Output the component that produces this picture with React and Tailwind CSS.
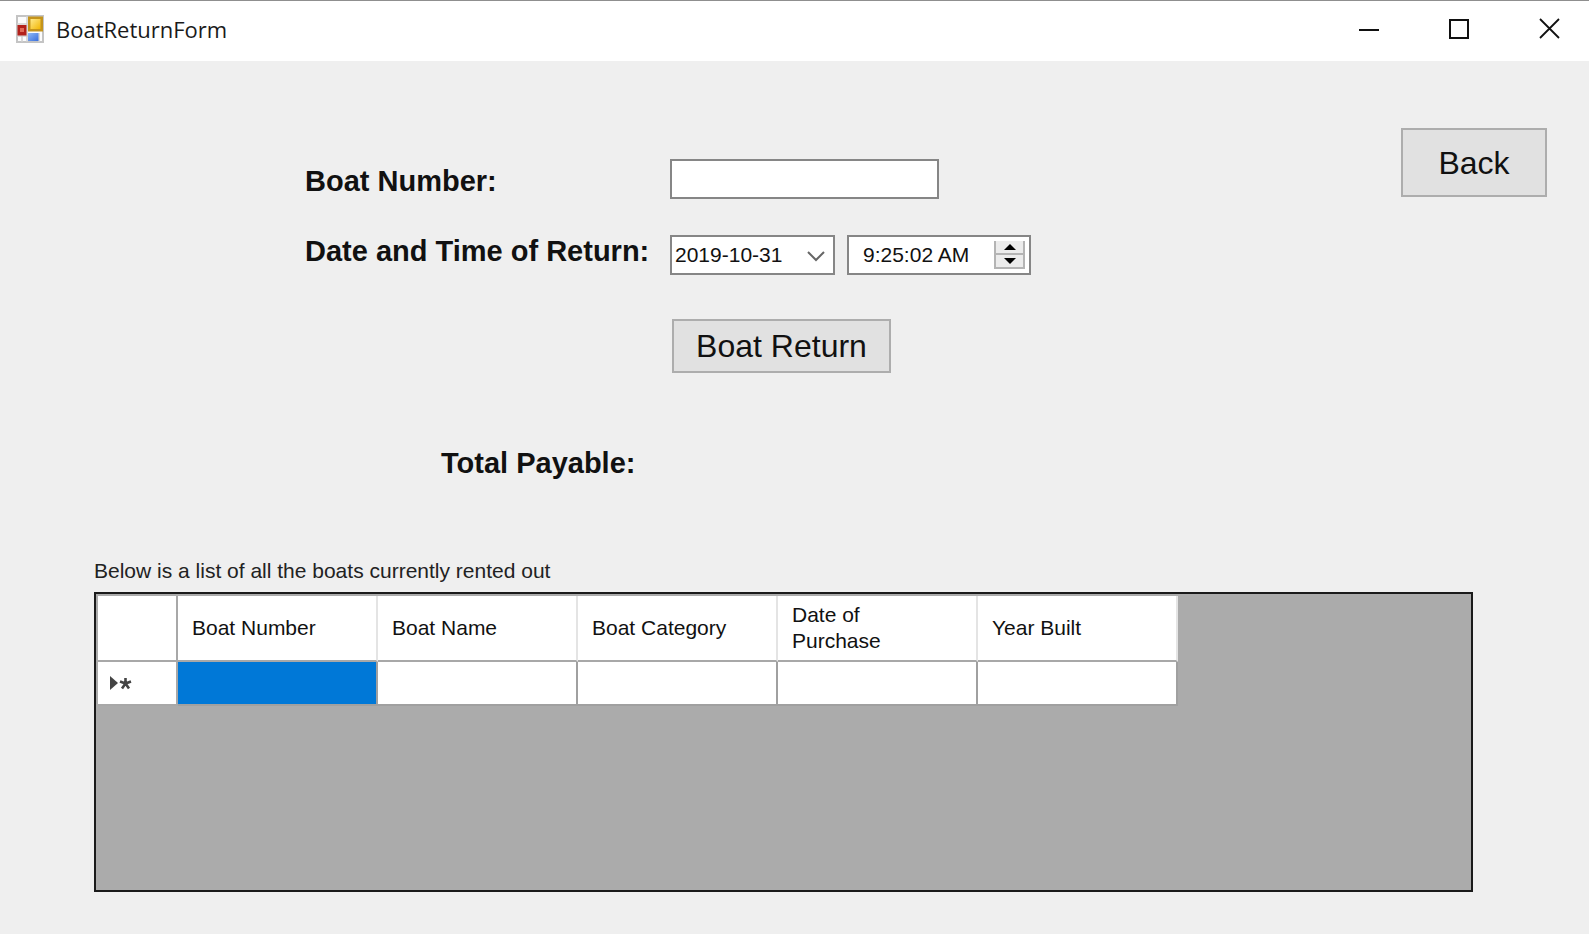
const columns = ["Boat Number", "Boat Name", "Boat Category", "Date of Purchase", "Year Built"];

function FormIcon() {
  return (
    <svg className="size-7" viewBox="0 0 28 28" aria-hidden="true">
      <defs>
        <linearGradient id="gold" x1="0" y1="0" x2="1" y2="1">
          <stop offset="0" stopColor="#ffe98a" />
          <stop offset="1" stopColor="#f2b705" />
        </linearGradient>
        <linearGradient id="blue" x1="0" y1="0" x2="1" y2="1">
          <stop offset="0" stopColor="#8fb8f5" />
          <stop offset="1" stopColor="#3a6fdc" />
        </linearGradient>
      </defs>
      <rect x="1" y="1" width="26" height="26" fill="#fcfcfc" stroke="#c4c4c4" strokeWidth="2" />
      <path d="M1 9H11M1 21H12M6 21V27M11 1V27M23 18V27" stroke="#cfcfcf" strokeWidth="1.500" />
      <rect x="12" y="1.500" width="15" height="15" fill="#c4941c" />
      <rect x="14.500" y="4" width="10" height="10" fill="url(#gold)" />
      <rect x="1.500" y="10" width="9" height="10.500" fill="#b3211b" />
      <rect x="4" y="13" width="4" height="4" fill="#e06a58" />
      <rect x="12" y="18" width="10.500" height="8" fill="url(#blue)" />
    </svg>
  );
}

function TitleBar() {
  return (
    <header className="flex h-[61px] items-center border-t border-[#8f8f8f] bg-white pr-7 pb-1 pl-4">
      <FormIcon />
      <h1 className="ml-3 font-['Open_Sans',sans-serif] text-[22px] leading-8 text-[#1a1a1a]">BoatReturnForm</h1>
      <div className="ml-auto flex items-center gap-[66px]">
        <button type="button" aria-label="Minimize" className="flex size-6 items-center justify-center">
          <svg className="size-6" viewBox="0 0 24 24"><path d="M2 13H22" stroke="#111" strokeWidth="2" /></svg>
        </button>
        <button type="button" aria-label="Maximize" className="flex size-6 items-center justify-center">
          <svg className="size-6" viewBox="0 0 24 24"><rect x="3" y="3" width="18" height="18" fill="none" stroke="#111" strokeWidth="2" /></svg>
        </button>
        <button type="button" aria-label="Close" className="flex size-6 items-center justify-center">
          <svg className="size-6" viewBox="0 0 24 24"><path d="M3 2L22 21M22 2L3 21" stroke="#111" strokeWidth="1.800" /></svg>
        </button>
      </div>
    </header>
  );
}

function SpinButton({ label, up }) {
  return (
    <button type="button" aria-label={label} className="flex h-[14px] w-[31px] items-center justify-center border-x-2 border-b-2 border-[#b4b4b4] bg-[#ececec]">
      <svg className="h-[6px] w-3" viewBox="0 0 12 6">
        <path d={up ? "M6 0L12 6H0Z" : "M6 6L12 0H0Z"} fill="#000" />
      </svg>
    </button>
  );
}

function RentalForm() {
  return (
    <form className="flex items-start pr-[42px] pl-[305px]" onSubmit={(e) => e.preventDefault()}>
      <div className="flex w-[365px] shrink-0 flex-col gap-[30px] pt-[100px] text-[29px] leading-10 font-bold text-[#111]">
        <label htmlFor="boat-number">Boat Number:</label>
        <label htmlFor="return-date">Date and Time of Return:</label>
        <p className="pt-[142px] pl-[136px]">Total Payable:</p>
      </div>
      <div className="flex flex-col items-start pt-[98px]">
        <input id="boat-number" type="text" className="h-10 w-[269px] border-2 border-[#868686] bg-white px-1 text-[21px] outline-none" />
        <div className="mt-9 flex gap-3">
          <div className="flex h-10 w-[165px] items-center border-2 border-[#868686] bg-white pr-2 pl-[3px]">
            <input id="return-date" type="text" defaultValue="2019-10-31" className="w-full min-w-0 text-[21px] leading-8 text-[#111] outline-none" />
            <button type="button" aria-label="Open calendar" className="shrink-0">
              <svg className="h-5 w-[18px]" viewBox="0 0 18 20"><path d="M1 7L9 15L17 7" fill="none" stroke="#666" strokeWidth="2" /></svg>
            </button>
          </div>
          <div className="flex h-10 w-[184px] items-center border-2 border-[#868686] bg-white pr-1 pl-[14px]">
            <input type="text" aria-label="Time of return" defaultValue="9:25:02 AM" className="w-full min-w-0 text-[21px] leading-8 text-[#111] outline-none" />
            <div className="flex shrink-0 flex-col">
              <SpinButton label="Later" up />
              <SpinButton label="Earlier" />
            </div>
          </div>
        </div>
        <button type="submit" className="mt-11 ml-[2px] h-[54px] w-[219px] border-2 border-[#adadad] bg-[#e1e1e1] text-[32px] leading-10 text-[#111]">
          Boat Return
        </button>
      </div>
      <button type="button" className="mt-[67px] ml-auto h-[69px] w-[146px] border-2 border-[#adadad] bg-[#e1e1e1] text-[32px] leading-10 text-[#111]">
        Back
      </button>
    </form>
  );
}

function BoatTable() {
  return (
    <section className="flex flex-1 flex-col pt-[76px] pr-[116px] pb-[42px] pl-[94px]">
      <h2 id="rented" className="text-[21px] leading-6 text-[#222]">Below is a list of all the boats currently rented out</h2>
      <div className="mt-[9px] flex-1 border-2 border-[#1a1a1a] bg-[#ababab] pt-[2px] pl-[2px]">
        <table aria-labelledby="rented" className="w-[1080px] table-fixed border-separate border-spacing-0 text-left text-[21px] leading-[26px] text-[#111]">
          <thead>
            <tr className="h-[66px]">
              <td className="w-20 border-r-2 border-b-2 border-[#a8a8a8] bg-white" />
              {columns.map((c) => (
                <th key={c} scope="col" className="border-r-2 border-b-2 border-r-[#e4e4e4] border-b-[#a8a8a8] bg-white pr-8 pl-[14px] font-normal">
                  {c}
                </th>
              ))}
            </tr>
          </thead>
          <tbody>
            <tr className="h-11">
              <th scope="row" aria-label="New row" className="border-r-2 border-b-2 border-[#a8a8a8] bg-white pl-3">
                <svg className="h-4 w-6" viewBox="0 0 24 16">
                  <path d="M0 1L8 8L0 15Z" fill="#444" />
                  <path d="M15.500 8.500V3M15.500 8.500L21 6.500M15.500 8.500L19 13.500M15.500 8.500L12 13.500M15.500 8.500L10 6.500" stroke="#444" strokeWidth="2.600" fill="none" />
                </svg>
              </th>
              {columns.map((c, i) => (
                <td key={c} className={i === 0 ? "border-r-2 border-b-2 border-[#a0a0a0] bg-[#0078d7]" : "border-r-2 border-b-2 border-[#a0a0a0] bg-white"} />
              ))}
            </tr>
          </tbody>
        </table>
      </div>
    </section>
  );
}

export default function App() {
  return (
    <div className="flex min-h-screen flex-col bg-[#efefef] font-['Liberation_Sans',Arial,sans-serif]">
      <TitleBar />
      <main className="flex flex-1 flex-col">
        <RentalForm />
        <BoatTable />
      </main>
    </div>
  );
}
